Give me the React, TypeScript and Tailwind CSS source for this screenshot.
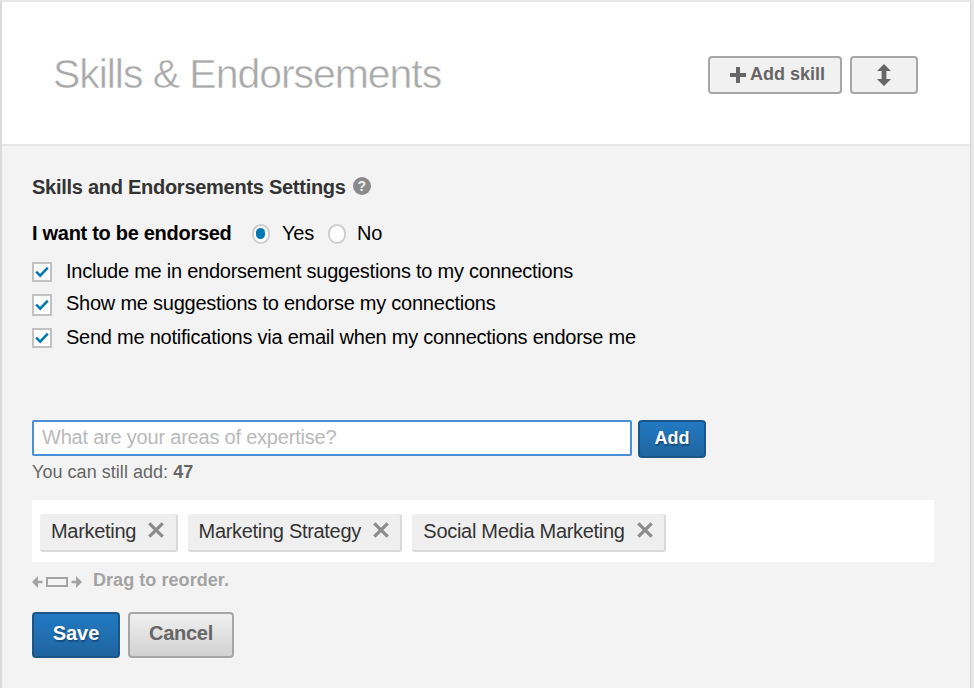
import { useState } from "react";

const initialSkills = ["Marketing", "Marketing Strategy", "Social Media Marketing"];

const settings = [
  {
    label: "Include me in endorsement suggestions to my connections",
    row: "h-8",
    box: "h-5 mt-px",
    text: "leading-5",
  },
  {
    label: "Show me suggestions to endorse my connections",
    row: "h-8",
    box: "h-[22px] mt-px",
    text: "leading-5",
  },
  {
    label: "Send me notifications via email when my connections endorse me",
    row: "h-9",
    box: "h-5 mt-[3px]",
    text: "pt-0.5 leading-5",
  },
];

function CheckIcon() {
  return (
    <svg width="14" height="12" viewBox="0 0 14 12" fill="none">
      <path d="M1.2 5.6 5.2 9.6 12.8 1.6" stroke="#0077b5" strokeWidth="2.5" />
    </svg>
  );
}

function CloseIcon() {
  return (
    <svg width="16" height="16" viewBox="0 0 16 16" fill="none">
      <path d="M1.3 1.3 14.7 14.7M14.7 1.3 1.3 14.7" stroke="#8b8b8b" strokeWidth="3.2" />
    </svg>
  );
}

function PlusIcon() {
  return (
    <svg width="16" height="16" viewBox="0 0 16 16" fill="#666">
      <path d="M6 0h4v6h6v4h-6v6H6v-6H0V6h6z" />
    </svg>
  );
}

function SortIcon() {
  return (
    <svg width="14" height="22" viewBox="0 0 14 22" fill="#666">
      <path d="M7 0 14 7H9.4v8H14L7 22 0 15h4.6V7H0z" />
    </svg>
  );
}

function DragIcon() {
  return (
    <svg width="50" height="12" viewBox="0 0 50 12" fill="#a3a3a3">
      <path d="M0 6 6 0v4.8h4.5v2.4H6V12z" />
      <rect x="15" y="2" width="20" height="8" fill="none" stroke="#a3a3a3" strokeWidth="2" />
      <path d="M50 6 44 0v4.8h-4.5v2.4H44V12z" />
    </svg>
  );
}

export default function App() {
  const [skills, setSkills] = useState(initialSkills);
  const [endorsed, setEndorsed] = useState(true);

  return (
    <div className="h-[688px] w-[974px] overflow-hidden bg-[#e8e8e8] font-['Liberation_Sans',Arial,sans-serif] text-xl tracking-[-0.24px] text-black">
      <div className="h-full w-[971px] border-t-2 border-r border-l-2 border-t-[#e7e7e7] border-r-[#d2d2d2] border-l-[#dadada] bg-[#f3f3f3]">
        {/* Header */}
        <header className="flex h-36 items-center justify-between border-b-2 border-[#e6e6e6] bg-white pt-1 pr-[52px] pl-[51px]">
          <h1 className="pb-px text-[41px] leading-none tracking-[-1.05px] text-[#a9a9a9] [-webkit-text-stroke:0.5px_white]">
            Skills &amp; Endorsements
          </h1>
          <div className="flex gap-2 text-lg font-bold tracking-normal text-[#666]">
            <button className="flex h-[38px] w-[134px] items-center justify-center gap-1 rounded border-2 border-[#a6a6a6] bg-[#f1f1f1] pl-[5px]">
              <PlusIcon />
              <span className="pb-0.5">Add skill</span>
            </button>
            <button className="flex h-[38px] w-[68px] items-center justify-center rounded border-2 border-[#a6a6a6] bg-[#f1f1f1] pb-px">
              <SortIcon />
            </button>
          </div>
        </header>

        <main className="px-[30px] pt-[27px]">
          {/* Endorsement settings */}
          <div className="flex h-7 items-center gap-[7px]">
            <h2 className="font-bold tracking-[-0.27px] text-[#333]">
              Skills and Endorsements Settings
            </h2>
            <span className="mb-0.5 flex h-[18px] w-[18px] items-center justify-center rounded-full bg-[#8a8a8a] text-sm font-bold tracking-normal text-[#f3f3f3]">
              ?
            </span>
          </div>

          <div className="mt-[18px] flex h-7 items-center">
            <span className="w-[220px] font-bold tracking-[-0.29px]">I want to be endorsed</span>
            {[true, false].map((value) => (
              <button
                key={String(value)}
                onClick={() => setEndorsed(value)}
                className={value ? "flex w-[76px] items-center gap-3" : "flex items-center gap-[11px]"}
              >
                <span className="mt-0.5 flex h-5 w-[18px] items-center justify-center rounded-full border-2 border-[#cdcdcd] bg-white">
                  {endorsed === value && (
                    <span className="mr-0.5 mb-0.5 h-[11px] w-[9px] rounded-full bg-[#0077b5]" />
                  )}
                </span>
                {value ? "Yes" : "No"}
              </button>
            ))}
          </div>

          <div className="mt-3.5 h-[159px]">
            {settings.map((item) => (
              <div key={item.label} className={`flex gap-3.5 ${item.row}`}>
                <span
                  className={`flex w-5 items-center justify-center border-2 border-[#c2c2c2] bg-white ${item.box}`}
                >
                  <CheckIcon />
                </span>
                <span className={item.text}>{item.label}</span>
              </div>
            ))}
          </div>

          {/* Skill input */}
          <div className="flex gap-1.5">
            <input
              placeholder="What are your areas of expertise?"
              className="h-9 w-[600px] rounded-[2px] border-2 border-[#4a90d9] bg-white px-2 pb-0.5 tracking-[-0.21px] outline-none placeholder:text-[#b9b9b9]"
            />
            <button className="h-[38px] w-[68px] rounded border-2 border-[#1b5688] bg-linear-to-b from-[#2279c2] to-[#1f659f] pb-0.5 text-lg font-bold tracking-normal text-white [text-shadow:1px_2px_1px_#174e7e]">
              Add
            </button>
          </div>
          <p className="text-lg leading-7 tracking-[0.04px] text-[#666]">
            You can still add: <b>47</b>
          </p>

          <div className="mt-3.5 flex h-[62px] w-[902px] gap-2.5 bg-white px-2 pt-3.5 tracking-[-0.3px] text-[#333]">
            {skills.map((skill) => (
              <div
                key={skill}
                className="flex h-[38px] items-center gap-3 rounded-[3px] border-r-2 border-b-2 border-[#d9d9d9] bg-[#efefef] pr-[11.4px] pb-0.5 pl-[11px]"
              >
                {skill}
                <button
                  className="pb-0.5"
                  onClick={() => setSkills(skills.filter((s) => s !== skill))}
                >
                  <CloseIcon />
                </button>
              </div>
            ))}
          </div>

          <div className="mt-1 flex h-7 items-center gap-[11px] text-lg font-bold tracking-[0.06px] text-[#a3a3a3]">
            <span className="mt-1">
              <DragIcon />
            </span>
            Drag to reorder.
          </div>

          {/* Actions */}
          <div className="mt-[18px] flex gap-2 font-bold">
            <button className="h-[46px] w-[88px] rounded border-2 border-[#1b5688] bg-linear-to-b from-[#2279c2] to-[#1f659f] pb-1 tracking-normal text-white [text-shadow:1px_2px_1px_#174e7e]">
              Save
            </button>
            <button className="h-[46px] w-[106px] rounded border-2 border-[#a6a6a6] bg-linear-to-b from-[#f0f0f0] to-[#d2d2d2] pb-1 text-[#666]">
              Cancel
            </button>
          </div>
        </main>
      </div>
    </div>
  );
}
